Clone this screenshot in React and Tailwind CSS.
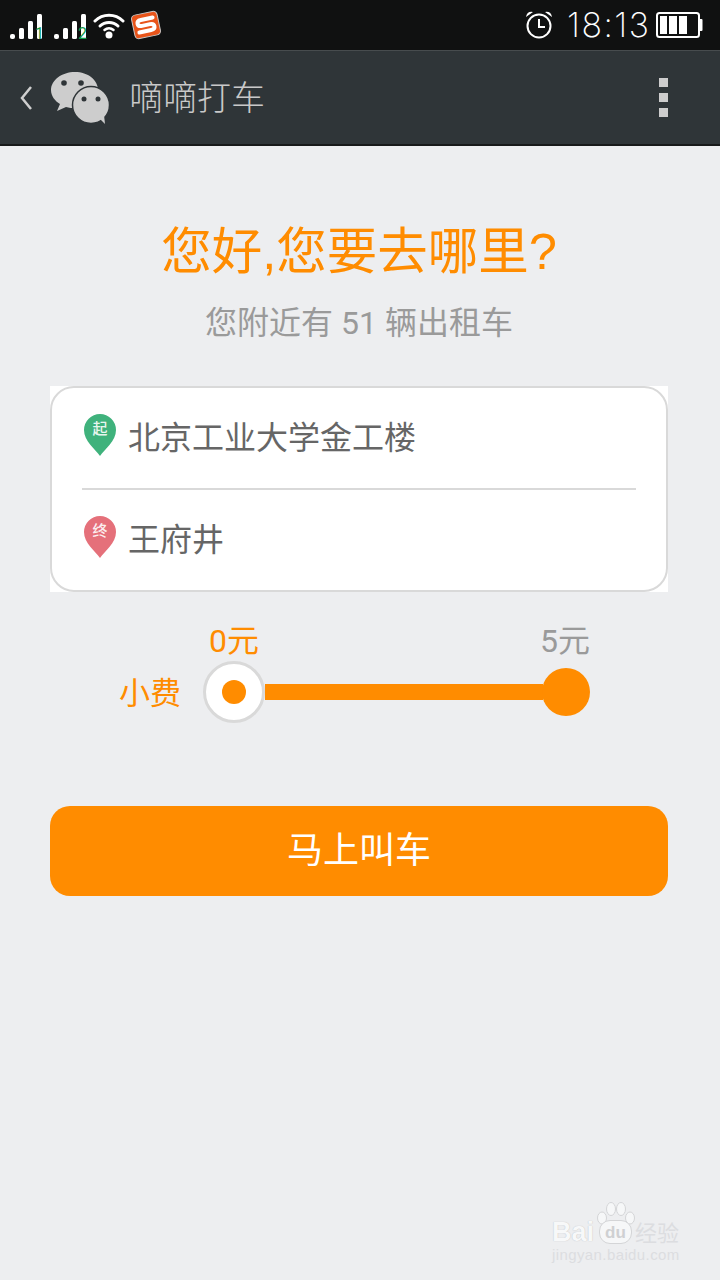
import React from "react";

const cjk = "font-['Roboto','Noto_Sans_CJK_SC',sans-serif]";

const SignalBars = ({ num }) => (
  <svg width="36" height="36" viewBox="0 0 36 36">
    <rect x="0" y="27" width="5" height="5" rx="2" fill="#fff" />
    <rect x="9" y="21" width="5" height="11" rx="1.5" fill="#fff" />
    <rect x="18" y="14" width="5" height="18" rx="1.5" fill="#fff" />
    <rect x="27" y="7" width="5" height="25" rx="1.5" fill="#fff" />
    <text x={num === "1" ? 29.5 : 28.5} y="32" fontSize="16" fill="#0f9a4a" textAnchor="middle" fontFamily="Roboto, sans-serif">{num}</text>
  </svg>
);

const Pin = ({ color, label }) => (
  <svg width="34" height="44" viewBox="0 0 34 44" className="shrink-0 -mt-[7px] ml-[1px]">
    <path d="M17 43 C12 36 1 28 1 17 A16 16 0 0 1 33 17 C33 28 22 36 17 43 Z" fill={color} />
    <text x="17" y="21" fontSize="15" fontWeight="500" fill="#fff" fillOpacity="0.9" textAnchor="middle" fontFamily="'Noto Sans CJK SC', sans-serif">{label}</text>
  </svg>
);

const App = () => {
  return (
    <div className={`relative w-[720px] h-[1280px] overflow-hidden bg-[#edeef0] ${cjk}`}>
      {/* Status bar */}
      <div className="h-[50px] bg-[#101111] flex items-center pl-[10px] pr-[17px]">
        <SignalBars num="1" />
        <div className="w-[8px]" />
        <SignalBars num="2" />
        <svg width="32" height="28" viewBox="0 0 32 28" className="ml-[3px]">
          <path d="M2 10 A20 20 0 0 1 30 10" fill="none" stroke="#fff" strokeWidth="3" strokeLinecap="round" />
          <path d="M7 15 A13 13 0 0 1 25 15" fill="none" stroke="#fff" strokeWidth="3" strokeLinecap="round" />
          <path d="M11.5 19 A7 7 0 0 1 20.5 19" fill="none" stroke="#fff" strokeWidth="2.5" strokeLinecap="round" />
          <circle cx="16" cy="24" r="3.5" fill="#fff" />
        </svg>
        <svg width="32" height="30" viewBox="0 0 32 30" className="ml-[5px]">
          <g transform="rotate(-12 16 15)">
            <rect x="3" y="3" width="26" height="24" rx="4" fill="#e8541a" stroke="#c9c9c9" strokeWidth="1" />
            <path d="M24 9 H12 Q8 9 8 12 Q8 15 12 15 H20 Q24 15 24 18 Q24 21 20 21 H8" fill="none" stroke="#fff" strokeWidth="4" strokeLinecap="round" />
          </g>
        </svg>
        <div className="flex-1" />
        <svg width="30" height="30" viewBox="0 0 30 30" className="mr-[13px]">
          <circle cx="15" cy="16" r="11.5" fill="none" stroke="#fff" strokeWidth="2" />
          <path d="M15 9 V17 H21" fill="none" stroke="#fff" strokeWidth="2" />
          <path d="M2 7 Q3 1 9 2 Z M28 7 Q27 1 21 2 Z" fill="#fff" />
        </svg>
        <span className="w-[89px] text-[34px] leading-none font-extralight text-white tracking-[1.5px] font-['Inter','Roboto',sans-serif] whitespace-nowrap">18:13</span>
        <svg width="47" height="26" viewBox="0 0 47 26">
          <rect x="1" y="1" width="42" height="24" rx="2.5" fill="none" stroke="#fff" strokeWidth="2" />
          <rect x="43" y="7" width="3.5" height="12" rx="1" fill="#fff" />
          <rect x="4" y="4" width="7" height="18" fill="#fff" />
          <rect x="13" y="4" width="8" height="18" fill="#fff" />
          <rect x="23" y="4" width="8" height="18" fill="#fff" />
        </svg>
      </div>

      {/* Title bar */}
      <div className="h-[96px] bg-[#2f3538] border-t border-[#474c4e] border-b-2 border-b-[#17191a] flex items-center pl-[19px] pr-[52px]">
        <svg width="16" height="26" viewBox="0 0 16 26">
          <path d="M12 2 L3 13 L12 24" fill="none" stroke="#cfcfcf" strokeWidth="2.5" />
        </svg>
        <svg width="62" height="54" viewBox="0 0 62 54" className="ml-[15px]">
          <path d="M25 1 C12 1 1 9 1 19 C1 25 5 30 10 33 L7 40 L16 36 C19 37 22 37 26 37 C38 37 48 29 48 19 C48 9 38 1 25 1 Z" fill="#cdcdcd" />
          <circle cx="14" cy="12" r="2.8" fill="#2f3538" />
          <circle cx="31" cy="12" r="2.8" fill="#2f3538" />
          <circle cx="41" cy="34" r="18.5" fill="#cdcdcd" stroke="#2f3538" strokeWidth="1.5" />
          <path d="M50 48 L55 53 L54 44 Z" fill="#cdcdcd" />
          <circle cx="34" cy="28" r="2.5" fill="#2f3538" />
          <circle cx="48" cy="28" r="2.5" fill="#2f3538" />
        </svg>
        <span className="ml-[17px] text-[34px] leading-none font-light text-[#c9c9c9]">嘀嘀打车</span>
        <div className="flex-1" />
        <div className="flex flex-col gap-[6px]">
          <div className="w-[9px] h-[9px] bg-[#cdcdcd]" />
          <div className="w-[9px] h-[9px] bg-[#cdcdcd]" />
          <div className="w-[9px] h-[9px] bg-[#cdcdcd]" />
        </div>
      </div>

      {/* Main content */}
      <div className="pl-[50px] pr-[52px] pt-[76px] flex flex-col">
        <h1 className="h-[60px] flex items-center justify-center text-[50.5px] leading-none font-normal text-[#ff8c00] whitespace-nowrap font-['Liberation_Sans','Noto_Sans_CJK_SC',sans-serif]">您好,您要去哪里?</h1>
        <p className="mt-[21px] h-[40px] flex items-center justify-center text-[32px] leading-none text-[#9a9a9a] whitespace-pre">您附近有 51 辆出租车</p>

        {/* Address card */}
        <div className="mt-[43px] h-[206px] bg-white">
          <div className="h-full border-2 border-[#d9d9d9] rounded-[24px] px-[30px] flex flex-col">
            <div className="h-[102px] flex items-center gap-[11px] border-b-2 border-[#d9d9d9]">
              <Pin color="#3fb27c" label="起" />
              <span className="text-[32px] leading-none text-[#666] whitespace-nowrap">北京工业大学金工楼</span>
            </div>
            <div className="flex-1 flex items-center gap-[11px]">
              <Pin color="#e5707a" label="终" />
              <span className="text-[32px] leading-none text-[#666] whitespace-nowrap">王府井</span>
            </div>
          </div>
        </div>

        {/* Tip slider */}
        <div className="mt-[30px] pl-[153px] pr-[80px] flex justify-between">
          <span className="w-[62px] text-center text-[32px] leading-[38px] text-[#ff8c00] whitespace-nowrap">0元</span>
          <span className="w-[48px] text-center text-[32px] leading-[38px] text-[#9a9a9a] whitespace-nowrap">5元</span>
        </div>
        <div className="mt-[1px] pl-[69px] pr-[78px] h-[62px] flex items-center">
          <span className="w-[84px] mt-[3px] text-[31px] leading-none text-[#ff8c00] whitespace-nowrap">小费</span>
          <div className="w-[62px] h-[62px] shrink-0 rounded-full bg-white border-[3px] border-[#d9d9d9] flex items-center justify-center">
            <div className="w-[24px] h-[24px] rounded-full bg-[#ff8c00]" />
          </div>
          <div className="flex-1 h-[16px] bg-[#ff8c00]" />
          <div className="w-[48px] h-[48px] shrink-0 -ml-[1px] rounded-full bg-[#ff8c00]" />
        </div>

        <button className="mt-[83px] h-[90px] rounded-[20px] bg-[#ff8c00] text-white text-[36px] leading-none">马上叫车</button>
      </div>

      {/* Baidu watermark */}
      <div className="absolute left-[552px] top-[1202px] w-[130px] h-[62px] text-[#f7f8f9] [text-shadow:0_0_1px_#b4b5b7]">
        <svg width="40" height="30" viewBox="0 0 40 30" className="absolute left-[44px] top-0">
          <g fill="#f6f7f8" stroke="#d4d5d7" strokeWidth="1">
            <ellipse cx="6" cy="16" rx="4.5" ry="6" />
            <ellipse cx="15" cy="7" rx="4.5" ry="6.5" />
            <ellipse cx="25" cy="7" rx="4.5" ry="6.5" />
            <ellipse cx="34" cy="16" rx="4.5" ry="6" />
          </g>
        </svg>
        <span className="absolute left-0 top-[14px] text-[27px] leading-[32px] font-bold font-['Liberation_Sans',sans-serif]">Bai</span>
        <div className="absolute left-[47px] top-[18px] w-[33px] h-[24px] rounded-[11px] bg-[#f6f7f8] border border-[#d4d5d7] flex items-center justify-center">
          <span className="text-[17px] leading-none text-[#cfd0d2] font-bold [text-shadow:none] font-['Liberation_Sans',sans-serif]">du</span>
        </div>
        <span className="absolute left-[83px] top-[19px] text-[22px] leading-[26px] text-[#dcdde0] [text-shadow:none] whitespace-nowrap">经验</span>
        <span className="absolute left-0 top-[44px] text-[15px] leading-[18px] tracking-[0.4px] text-[#dcdde0] [text-shadow:none] whitespace-nowrap font-['Liberation_Sans',sans-serif]">jingyan.baidu.com</span>
      </div>
    </div>
  );
};

export default App;
